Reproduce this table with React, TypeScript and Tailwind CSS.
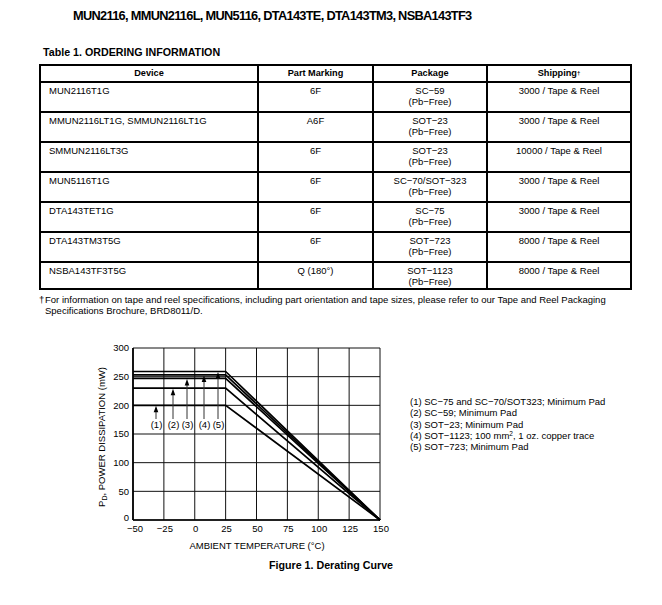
/** Ordering information table and derating curve, datasheet page. */
const ROWS = [
	{ device: "MUN2116T1G", marking: "6F", pkg: "SC−59", ship: "3000 / Tape & Reel" },
	{ device: "MMUN2116LT1G, SMMUN2116LT1G", marking: "A6F", pkg: "SOT−23", ship: "3000 / Tape & Reel" },
	{ device: "SMMUN2116LT3G", marking: "6F", pkg: "SOT−23", ship: "10000 / Tape & Reel" },
	{ device: "MUN5116T1G", marking: "6F", pkg: "SC−70/SOT−323", ship: "3000 / Tape & Reel" },
	{ device: "DTA143TET1G", marking: "6F", pkg: "SC−75", ship: "3000 / Tape & Reel" },
	{ device: "DTA143TM3T5G", marking: "6F", pkg: "SOT−723", ship: "8000 / Tape & Reel" },
	{ device: "NSBA143TF3T5G", marking: "Q (180°)", pkg: "SOT−1123", ship: "8000 / Tape & Reel" },
];

const CURVES = [200, 230, 247, 253, 259];
const ARROWS = [
	{ label: "(1)", x: 66, p: 200 },
	{ label: "(2)", x: 83, p: 230 },
	{ label: "(3)", x: 97, p: 247 },
	{ label: "(4)", x: 114, p: 253 },
	{ label: "(5)", x: 128, p: 259 },
];

const PL = 43;
const PR = 290;
const PT = 9;
const PB = 181;
const xs = (t: number) => PL + ((t + 50) / 200) * (PR - PL);
const ys = (p: number) => PB - (p / 300) * (PB - PT);

function DeratingChart() {
	const temps = [-50, -25, 0, 25, 50, 75, 100, 125, 150];
	const powers = [0, 50, 100, 150, 200, 250, 300];
	return (
		<svg width={310} height={219} viewBox="0 0 310 219" className="block shrink-0">
			<g fontFamily="'Liberation Sans', Arial, sans-serif" fontSize="9.5" fill="#000">
				{temps.map((t) => (
					<line key={`v${t}`} x1={xs(t)} x2={xs(t)} y1={PT} y2={PB} stroke="#111" strokeWidth={1} />
				))}
				{powers.map((p) => (
					<line key={`h${p}`} x1={PL} x2={PR} y1={ys(p)} y2={ys(p)} stroke="#111" strokeWidth={1} />
				))}
				<line x1={PL} x2={PL} y1={PT} y2={PB} stroke="#000" strokeWidth={1.7} />
				<line x1={PL} x2={PR} y1={PB} y2={PB} stroke="#000" strokeWidth={1.7} />
				{CURVES.map((p) => (
					<polyline
						key={p}
						points={`${xs(-50)},${ys(p)} ${xs(25)},${ys(p)} ${xs(150)},${ys(0)}`}
						fill="none"
						stroke="#000"
						strokeWidth={1.7}
					/>
				))}
				{ARROWS.map((a) => (
					<g key={a.label}>
						<line x1={a.x} x2={a.x} y1={ys(a.p) + 5} y2={80} stroke="#333" strokeWidth={1} />
						<polygon points={`${a.x},${ys(a.p) + 0.5} ${a.x - 2.3},${ys(a.p) + 7} ${a.x + 2.3},${ys(a.p) + 7}`} />
						<text x={a.x + 0.5} y={86} textAnchor="middle" dy="0.35em">
							{a.label}
						</text>
					</g>
				))}
				{powers.map((p) => (
					<text key={`yl${p}`} x={39} y={p === 0 ? ys(p) - 2 : ys(p)} textAnchor="end" dy="0.35em">
						{p}
					</text>
				))}
				{temps.map((t) => (
					<text key={`xl${t}`} x={xs(t) + (t === -50 ? 2 : 1)} y={190} textAnchor="middle" dy="0.35em">
						{t < 0 ? `−${-t}` : t}
					</text>
				))}
				<text x={167} y={207} textAnchor="middle" dy="0.35em">
					AMBIENT TEMPERATURE (°C)
				</text>
				<text transform="translate(12 98) rotate(-90)" textAnchor="middle" dy="0.35em">
					P<tspan fontSize="7" dy="2">D</tspan>
					<tspan dy="-2">, POWER DISSIPATION (mW)</tspan>
				</text>
			</g>
		</svg>
	);
}

export default function App() {
	return (
		<div className="w-[662px] h-[605px] bg-white text-black font-['Liberation_Sans',Arial,sans-serif]">
			<h1 className="pl-[73px] pt-[8px] text-[12.8px] leading-[15px] font-bold tracking-[-0.7px]">
				MUN2116, MMUN2116L, MUN5116, DTA143TE, DTA143TM3, NSBA143TF3
			</h1>

			<p className="mt-[23px] pl-[43px] text-[10.7px] leading-[13px] font-bold">
				Table 1. ORDERING INFORMATION
			</p>

			<div className="mt-[5px] ml-[39px] w-[593px] border-2 border-black text-[9.5px] leading-[11px]">
				<div className="grid grid-cols-[216px_115px_114px_144px] h-[15px] font-bold text-[9.2px] items-center text-center">
					<div>Device</div>
					<div className="h-full border-l-2 border-black flex items-center justify-center">Part Marking</div>
					<div className="h-full border-l-2 border-black flex items-center justify-center">Package</div>
					<div className="h-full border-l-2 border-black flex items-center justify-center">
						Shipping<sup className="text-[6px] relative -top-[1px]">†</sup>
					</div>
				</div>
				{ROWS.map((r, i) => (
					<div
						key={r.device}
						className={`grid grid-cols-[216px_115px_114px_144px] border-t-2 border-black ${
							i === ROWS.length - 1 ? "h-[27px]" : "h-[30px]"
						}`}
					>
						<div className="pl-[8px] pt-[2px]">{r.device}</div>
						<div className="border-l-2 border-black pt-[2px] text-center">{r.marking}</div>
						<div className="border-l-2 border-black pt-[2px] text-center">
							<div>{r.pkg}</div>
							<div>(Pb−Free)</div>
						</div>
						<div className="border-l-2 border-black pt-[2px] text-center">{r.ship}</div>
					</div>
				))}
			</div>

			<div className="mt-[4px] ml-[39px] flex text-[9.5px] leading-[11px]">
				<span className="w-[6px] shrink-0">†</span>
				<p>
					For information on tape and reel specifications, including part orientation and tape sizes, please refer to our Tape and Reel Packaging
					<br />
					Specifications Brochure, BRD8011/D.
				</p>
			</div>

			<div className="mt-[23px] flex">
				<div className="ml-[90px]">
					<DeratingChart />
				</div>
				<ul className="ml-[10px] mt-[57px] text-[9.5px] leading-[11.3px]">
					<li>(1) SC−75 and SC−70/SOT323; Minimum Pad</li>
					<li>(2) SC−59; Minimum Pad</li>
					<li>(3) SOT−23; Minimum Pad</li>
					<li>
						(4) SOT−1123; 100 mm<sup className="text-[6.5px]">2</sup>, 1 oz. copper trace
					</li>
					<li>(5) SOT−723; Minimum Pad</li>
				</ul>
			</div>

			<p className="mt-[1px] text-center text-[10.7px] leading-[13px] font-bold">Figure 1. Derating Curve</p>
		</div>
	);
}
